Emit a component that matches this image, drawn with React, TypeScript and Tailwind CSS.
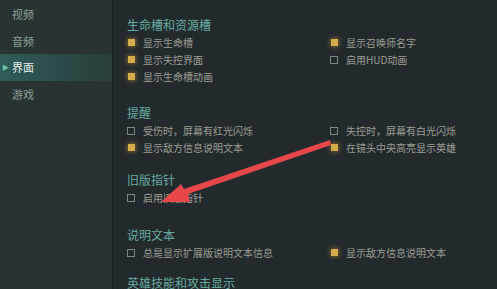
import React from 'react';

type Opt = { label: string; checked: boolean };

const sections: { title: string; mt: string; rows: [Opt, Opt | null][] }[] = [
  {
    title: '生命槽和资源槽',
    mt: 'mt-[16px]',
    rows: [
      [{ label: '显示生命槽', checked: true }, { label: '显示召唤师名字', checked: true }],
      [{ label: '显示失控界面', checked: true }, { label: '启用HUD动画', checked: false }],
      [{ label: '显示生命槽动画', checked: true }, null],
    ],
  },
  {
    title: '提醒',
    mt: 'mt-[19px]',
    rows: [
      [{ label: '受伤时，屏幕有红光闪烁', checked: false }, { label: '失控时，屏幕有白光闪烁', checked: false }],
      [{ label: '显示敌方信息说明文本', checked: true }, { label: '在镜头中央高亮显示英雄', checked: true }],
    ],
  },
  {
    title: '旧版指针',
    mt: 'mt-[15px]',
    rows: [[{ label: '启用旧版指针', checked: false }, null]],
  },
  {
    title: '说明文本',
    mt: 'mt-[20px]',
    rows: [[{ label: '总是显示扩展版说明文本信息', checked: false }, { label: '显示敌方信息说明文本', checked: true }]],
  },
  {
    title: '英雄技能和攻击显示',
    mt: 'mt-[13px]',
    rows: [],
  },
];

function Check({ opt }: { opt: Opt }) {
  return (
    <div className="flex items-center h-[17px]">
      {opt.checked ? (
        <span className="w-[7px] h-[7px] bg-[#d4ac4c] shadow-[0_0_4px_1px_rgba(200,150,50,0.5)] ml-[1px]" />
      ) : (
        <span className="w-[8px] h-[8px] border border-[#7f8582]" />
      )}
      <span className="ml-[8px] text-[10px] text-[#9c9e91] whitespace-nowrap">{opt.label}</span>
    </div>
  );
}

export default function App() {
  const nav = ['视频', '音频', '界面', '游戏'];
  return (
    <div
      className="relative w-[497px] h-[289px] overflow-hidden flex bg-[#232a2e]"
      style={{ fontFamily: '"Noto Sans CJK SC", "Liberation Sans", sans-serif' }}
    >
      {/* sidebar */}
      <div className="w-[113px] h-full bg-[#2a3333] border-r border-[#1c2224] pt-[1px] flex flex-col">
        {nav.map((n, i) => (
          <div
            key={n}
            className={
              'relative h-[26.5px] flex items-center pl-[12px] text-[11px] ' +
              (i === 2
                ? 'bg-gradient-to-r from-[#2f5d58] via-[#2b4c49] to-[#2a3d3c] text-[#e6efe9]'
                : 'text-[#8ba098]')
            }
          >
            {i === 2 && <span className="absolute left-[2px] text-[7px] text-[#6fc0b0]">▶</span>}
            {n}
          </div>
        ))}
      </div>

      {/* main */}
      <div className="flex-1 pl-[14px]">
        {sections.map((s) => (
          <div key={s.title} className={s.mt}>
            <div className="h-[18px] flex items-center text-[12px] text-[#66ab9f] whitespace-nowrap">{s.title}</div>
            {s.rows.map((r, i) => (
              <div key={i} className="grid grid-cols-[203px_1fr]">
                <Check opt={r[0]} />
                {r[1] ? <Check opt={r[1]} /> : <div />}
              </div>
            ))}
          </div>
        ))}
      </div>

      {/* annotation arrow */}
      <svg className="absolute left-0 top-0 pointer-events-none" width="497" height="289" viewBox="0 0 497 289">
        <polygon points="330,140 331,145 188,194 190,202 161,202 181,184 184,189" fill="#e8474a" />
      </svg>
    </div>
  );
}
